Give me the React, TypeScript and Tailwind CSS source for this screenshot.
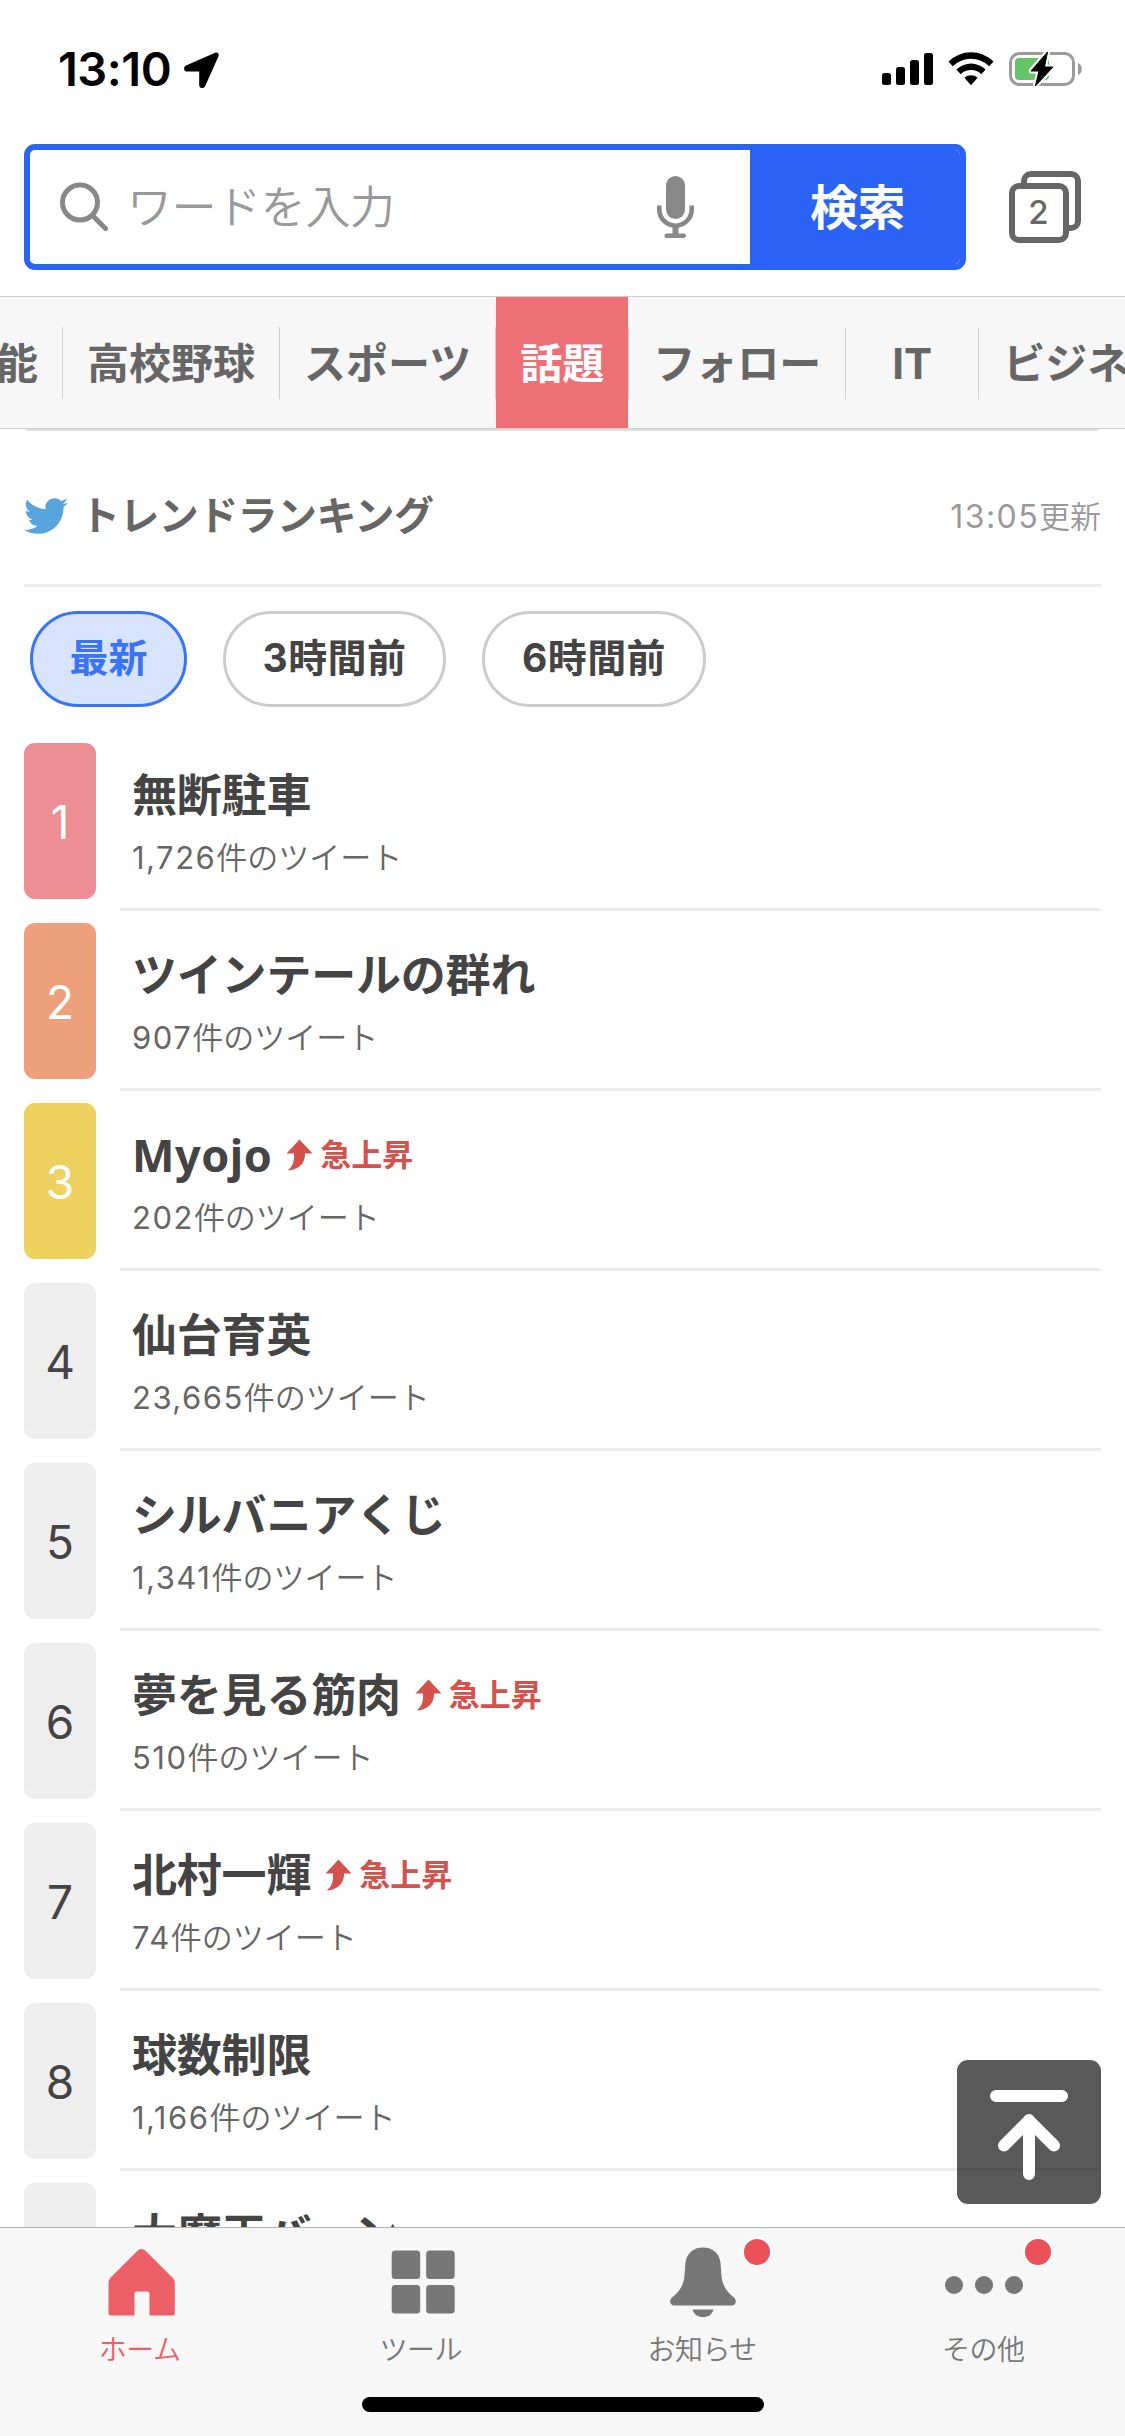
import type { ReactNode } from "react";
import { FaTwitter } from "react-icons/fa";

const categories = ["芸能", "高校野球", "スポーツ", "話題", "フォロー", "IT", "ビジネス"];

const periods = [
  { label: "最新", style: "w-[157px] border-[#3973f6] bg-[#d8e4fd] text-[#3973f6]" },
  { label: "3時間前", style: "w-[223px] border-[#ccc] text-[#444] tracking-[0.4px]" },
  { label: "6時間前", style: "w-[224px] border-[#ccc] text-[#444] tracking-[0.4px]" },
];

const trends = [
  { name: "無断駐車", count: "1,726", rising: false, color: "bg-[#ed8d94] text-white" },
  { name: "ツインテールの群れ", count: "907", rising: false, color: "bg-[#eea07a] text-white" },
  { name: "Myojo", count: "202", rising: true, color: "bg-[#efd160] text-white" },
  { name: "仙台育英", count: "23,665", rising: false, color: "bg-[#eeeeee] text-[#444]" },
  { name: "シルバニアくじ", count: "1,341", rising: false, color: "bg-[#eeeeee] text-[#444]" },
  { name: "夢を見る筋肉", count: "510", rising: true, color: "bg-[#eeeeee] text-[#444]" },
  { name: "北村一輝", count: "74", rising: true, color: "bg-[#eeeeee] text-[#444]" },
  { name: "球数制限", count: "1,166", rising: false, color: "bg-[#eeeeee] text-[#444]" },
  { name: "大魔王バーン", count: "1,052", rising: false, color: "bg-[#eeeeee] text-[#444]" },
];

function StatusBar() {
  return (
    <div className="flex h-[144px] shrink-0 items-start justify-between pl-[58px] pr-[43px] text-black">
      <div className="flex pt-[52px]">
        <span className="w-[126px] text-[47px] font-semibold leading-[34px] tracking-[-0.5px]">13:10</span>
        <svg className="h-[36px] w-[36px]" viewBox="0 0 36 36">
          <path
            d="M31.2.8 2 13.6C-.9 15-.4 19.600 3 19.600H15.200V33C15.200 36.700 19.800 37 21.100 34.200L34.500 4.300C35.500 1.900 33.500-.2 31.200.8Z"
            fill="currentColor"
          />
        </svg>
      </div>
      <svg className="mt-[48px] h-[42px] w-[200px]" viewBox="882 48 200 42">
        <rect x="882" y="73" width="9" height="12" rx="2.500" />
        <rect x="896" y="67" width="9" height="18" rx="2.500" />
        <rect x="910" y="60" width="9" height="25" rx="2.500" />
        <rect x="924" y="53" width="9" height="32" rx="2.500" />
        {/* wifi */}
        <path d="M948.500 61.500a32 32 0 0 1 45 0l-4.200 4.700a26 26 0 0 0-36.600 0z" />
        <path d="M956.400 69.500a21 21 0 0 1 29.200 0l-4.300 4.700a15 15 0 0 0-20.600 0z" />
        <path d="M964.400 77.700a10 10 0 0 1 13.200 0l-6.600 7.500z" />
        {/* battery */}
        <rect x="1010.500" y="53.500" width="63" height="31" rx="9" fill="none" stroke="#9b9b9b" strokeWidth="3" />
        <path d="M1078 63c5 1.500 5 10.500 0 12z" fill="#9b9b9b" />
        <rect x="1015" y="58" width="34" height="22" rx="4" fill="#65c466" />
        <path
          d="M1047.500 52 1031 71h8l-3.600 15L1053 67h-8.500z"
          stroke="#fff"
          strokeWidth="5"
          strokeLinejoin="round"
        />
        <path d="M1047.500 52 1031 71h8l-3.600 15L1053 67h-8.500z" stroke="#000" strokeLinejoin="round" />
      </svg>
    </div>
  );
}

function SearchHeader() {
  return (
    <div className="flex h-[152px] shrink-0 items-start pl-6">
      <div className="flex h-[126px] w-[942px] overflow-hidden rounded-[11px] border-[6px] border-[#2b63f6]">
        <div className="flex w-[720px] items-center pl-[30px] pr-[54px]">
          <svg className="h-[50px] w-[50px]" viewBox="0 0 50 50" fill="none" stroke="#888" strokeWidth="5">
            <circle cx="20" cy="20.500" r="17.500" />
            <path d="M32.500 33.500 45.500 46.500" strokeLinecap="round" />
          </svg>
          <span className="ml-[17px] mt-[2px] flex-1 text-[45px] font-[350] leading-[60px] tracking-[-0.4px] text-[#999]">
            ワードを入力
          </span>
          <svg className="h-[64px] w-[40px]" viewBox="0 0 40 64" fill="#888">
            <rect x="10" y="1" width="19" height="43" rx="9.500" />
            <path d="M3.300 30.500V34.500a16.200 16.200 0 0 0 32.400 0V30.500" fill="none" stroke="#888" strokeWidth="4.600" />
            <rect x="16.500" y="51" width="6" height="9" />
            <rect x="8.500" y="58.500" width="21.500" height="4.500" rx="2.200" />
          </svg>
        </div>
        <button className="flex-1 bg-[#2b63f6] pl-[5px] pt-[2px] text-[48px] font-bold leading-[60px] tracking-[-0.5px] text-white">
          検索
        </button>
      </div>
      <div className="relative ml-[43px] mt-[27px] h-[72px] w-[72px]">
        <svg className="h-full w-full" viewBox="0 0 72 72" fill="none" stroke="#666" strokeWidth="6">
          <path d="M15 12V10a7 7 0 0 1 7-7h40a7 7 0 0 1 7 7v40a7 7 0 0 1-7 7h-2" />
          <rect x="3" y="15" width="54" height="54" rx="7" />
        </svg>
        <span className="absolute left-0 top-[29px] w-[59px] text-center text-[33px] font-medium leading-[24px] text-[#666]">
          2
        </span>
      </div>
    </div>
  );
}

function CategoryNav() {
  return (
    <nav className="flex h-[133px] shrink-0 items-center border-y border-[#d0d0d0] bg-[#f7f7f7] text-[42px] font-bold text-[#666]">
      <div className="-ml-[70px] flex h-full items-center">
        {categories.map((c) => (
          <div key={c} className="flex h-full shrink-0 items-center">
            <span
              className={
                c === "話題"
                  ? "flex h-full min-w-[132px] items-center justify-center whitespace-nowrap bg-[#ee7077] px-6 pt-[2px] text-white"
                  : "flex h-full min-w-[132px] items-center justify-center whitespace-nowrap px-6 pt-[2px]"
              }
            >
              {c}
            </span>
            <span className="h-[72px] w-px bg-[#d0d0d0]" />
          </div>
        ))}
      </div>
    </nav>
  );
}

function RisingMark() {
  return (
    <span className="ml-[14px] flex items-center text-[31px] font-bold leading-[36px] text-[#d3524c]">
      <svg className="mr-[7px] h-[32px] w-[27px]" viewBox="0 0 27 32" fill="currentColor">
        <path d="M13.500.5 26.500 14.500H19C19.500 22 15 30 3 31.500c-1 .1-1-.7-.2-1.200C7 27.500 8.500 21 8 14.500H.5z" />
      </svg>
      急上昇
    </span>
  );
}

function TrendRow({ rank, name, count, rising, color }: (typeof trends)[number] & { rank: number }) {
  const latin = /^[A-Za-z]+$/.test(name);
  return (
    <li className="flex h-[180px] shrink-0">
      <div
        className={`mt-[12px] flex h-[156px] w-[72px] shrink-0 items-center justify-center rounded-[11px] pt-[2px] text-[46px] ${color}`}
      >
        {rank}
      </div>
      <div className="ml-6 flex-1 border-b-[3px] border-[#ebebeb] pl-3 pt-[38px]">
        <div className="flex h-[52px] items-center">
          <h3
            className={`font-['Noto_Sans','Noto_Sans_CJK_JP',sans-serif] text-[45px] font-bold leading-[52px] text-[#444] ${
              latin ? "tracking-[0.5px]" : "tracking-[-0.2px]"
            }`}
          >
            {name}
          </h3>
          {rising && <RisingMark />}
        </div>
        <p className="mt-[19px] text-[31px] font-[350] leading-[36px] text-[#666]">
          <span className="font-normal tracking-[1.500px]">{count}</span>件のツイート
        </p>
      </div>
    </li>
  );
}

function TrendRanking() {
  return (
    <section className="flex min-h-0 flex-1 flex-col overflow-hidden px-6">
      <div className="mx-[2px] h-[2px] shrink-0 rounded-b-sm bg-[#dedede]" />
      <div className="flex h-[156px] shrink-0 items-center border-b-[3px] border-[#ececec]">
        <FaTwitter className="mt-[17px] h-[44px] w-[44px] text-[#57a5dc]" />
        <h2 className="ml-[12px] mt-[17px] text-[40px] font-bold leading-[48px] tracking-[-0.6px] text-[#666]">
          トレンドランキング
        </h2>
        <span className="ml-auto mt-[18px] text-[31px] font-[350] leading-[36px] text-[#999]">
          <span className="text-[32px] font-normal tracking-[1.400px]">13:05</span>更新
        </span>
      </div>
      <div className="flex h-[144px] shrink-0 gap-9 pl-[6px] pt-[24px] text-[39px] font-bold">
        {periods.map((p) => (
          <button key={p.label} className={`h-24 rounded-full border-[3px] pb-[2px] ${p.style}`}>
            {p.label}
          </button>
        ))}
      </div>
      <ul className="flex flex-col">
        {trends.map((t, i) => (
          <TrendRow key={t.name} rank={i + 1} {...t} />
        ))}
      </ul>
    </section>
  );
}

function TabItem({
  label,
  active = false,
  badge = "",
  children,
}: {
  label: string;
  active?: boolean;
  badge?: string;
  children: ReactNode;
}) {
  return (
    <div className={`relative flex flex-1 flex-col items-center ${active ? "text-[#ec5f66]" : "text-[#777]"}`}>
      <svg className="mt-[16px] h-[76px] w-[80px]" viewBox="0 0 80 76" fill="currentColor">
        {children}
      </svg>
      <span className="mt-[13px] pr-[2px] text-[28px] font-[350] leading-[34px] tracking-[-0.5px]">{label}</span>
      {badge && <span className={`absolute top-[9px] h-[30px] w-[30px] rounded-full border-2 border-white bg-[#eb5158] ${badge}`} />}
    </div>
  );
}

function TabBar() {
  return (
    <footer className="flex h-[209px] shrink-0 flex-col items-center border-t border-[#b2b2b2] bg-[#f7f7f7]">
      <div className="flex h-[169px] w-full">
        <TabItem label="ホーム" active>
          <path d="M36 7.200q4.500-4.400 9 0L72 34.200q1.800 1.800 1.800 4.200V69q0 2.500-2.500 2.500H48.500V50q0-2.500-2.500-2.500H36Q33.500 47.500 33.500 50V71.500H10Q7.500 71.500 7.500 69V38.400q0-2.400 1.500-4.200z" />
        </TabItem>
        <TabItem label="ツール">
          <rect x="9.700" y="6.500" width="28.500" height="28.500" rx="3.500" />
          <rect x="44.200" y="6.500" width="28.500" height="28.500" rx="3.500" />
          <rect x="9.700" y="41" width="28.500" height="28.500" rx="3.500" />
          <rect x="44.200" y="41" width="28.500" height="28.500" rx="3.500" />
        </TabItem>
        <TabItem label="お知らせ" badge="left-[179px]">
          <path d="M40 3.500c10 0 16.500 6 17.500 15.500 1 8 .4 15 3 21.500 2.500 6 6 9.500 10.500 13 3.500 3.500 1.500 8-2 8H11c-3.500 0-5.500-4.500-2-8 4.500-3.500 8-7 10.500-13 2.600-6.500 2-13.500 3-21.500 1-9.500 7.500-15.500 17.500-15.500z" />
          <path d="M29.500 65.500h21c-1.500 5-5 7.500-10.500 7.500s-9-2.500-10.500-7.500z" />
        </TabItem>
        <TabItem label="その他" badge="left-[179px]">
          <circle cx="10" cy="41" r="9" />
          <circle cx="40" cy="41" r="9" />
          <circle cx="70" cy="41" r="9" />
        </TabItem>
      </div>
      <div className="h-[15px] w-[402px] rounded-full bg-black" />
    </footer>
  );
}

export default function App() {
  return (
    <div className="relative flex h-[2436px] w-[1125px] flex-col overflow-hidden bg-white font-['Inter','Noto_Sans_CJK_JP',sans-serif]">
      <StatusBar />
      <SearchHeader />
      <CategoryNav />
      <TrendRanking />
      <TabBar />
      {/* back to top */}
      <button className="absolute bottom-[232px] right-6 h-[144px] w-[144px] rounded-[11px] bg-black/65">
        <svg viewBox="0 0 144 144" fill="none" stroke="#fff" strokeWidth="12" strokeLinecap="round" strokeLinejoin="round">
          <path d="M39 36h66M72 114V60M47 85.500 72 60.500 97 85.500" />
        </svg>
      </button>
    </div>
  );
}
